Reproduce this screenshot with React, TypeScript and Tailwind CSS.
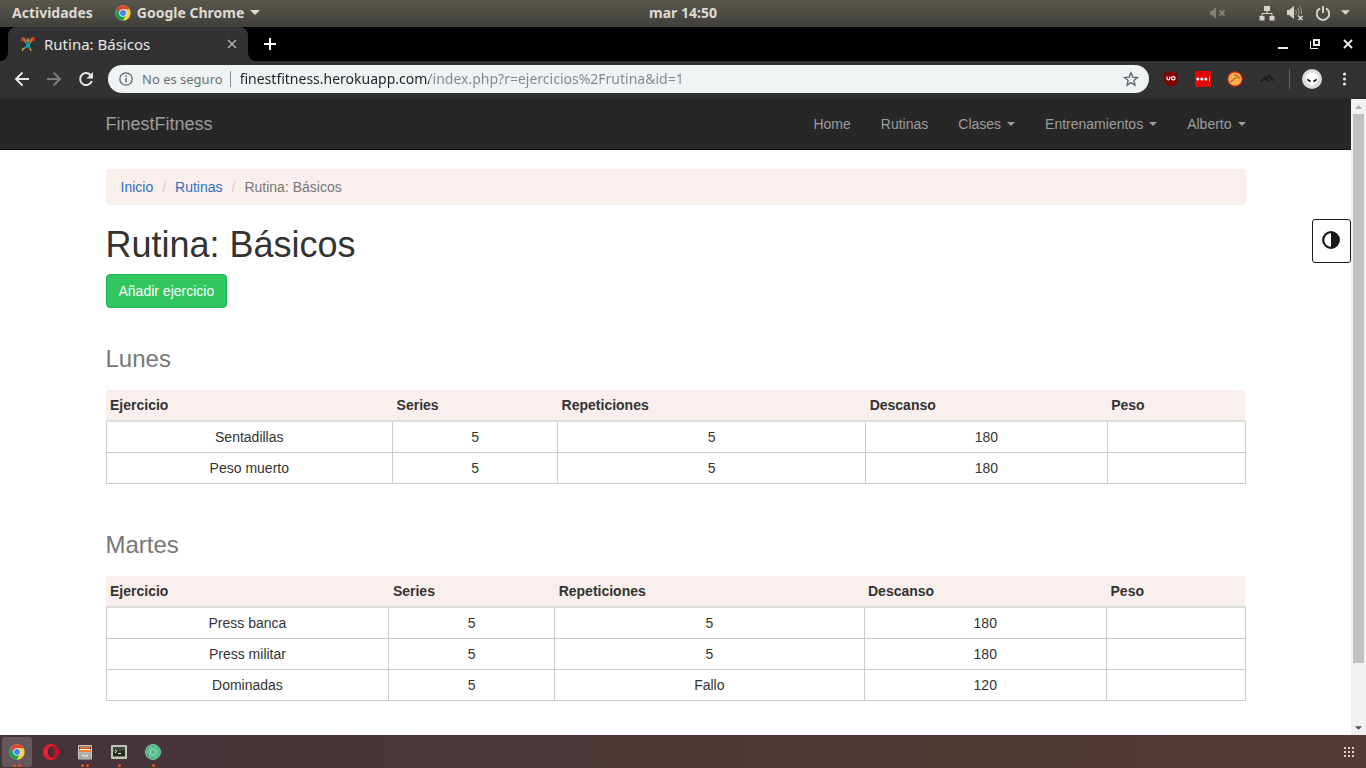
import React from "react";

type Row = [string, string, string, string, string];

const monday: Row[] = [
  ["Sentadillas", "5", "5", "180", ""],
  ["Peso muerto", "5", "5", "180", ""],
];
const tuesday: Row[] = [
  ["Press banca", "5", "5", "180", ""],
  ["Press militar", "5", "5", "180", ""],
  ["Dominadas", "5", "Fallo", "120", ""],
];

function ChromeLogo({ className }: { className: string }) {
  return (
    <svg viewBox="0 0 48 48" className={className} aria-hidden="true">
      <circle cx="24" cy="24" r="23" fill="#fdd03b" />
      <path d="M24 13H44.200A23 23 0 0 0 5 11L14.500 29.500Z" fill="#dc4437" />
      <path d="M5 11 14.500 29.500 33.500 29.500 23 47A23 23 0 0 1 5 11Z" fill="#169e55" />
      <circle cx="24" cy="24" r="11.500" fill="#f1f1f1" />
      <circle cx="24" cy="24" r="9" fill="#4285f4" />
    </svg>
  );
}

function Triangle({ className }: { className: string }) {
  return (
    <svg viewBox="0 0 10 5" className={className} aria-hidden="true">
      <path d="M0 0h10L5 5Z" fill="currentColor" />
    </svg>
  );
}

function SystemBar() {
  return (
    <header className="grid h-[27px] shrink-0 grid-cols-[1fr_auto_1fr] items-center bg-gradient-to-b from-[#58564e] to-[#403f3a] px-3 pb-0.5 font-['Noto_Sans',sans-serif] text-[14px] font-bold leading-5 text-[#dfdbd2]">
      <div className="flex items-center gap-5.5">
        <button type="button">Actividades</button>
        <button type="button" className="flex items-center gap-1.5">
          <ChromeLogo className="h-4 w-4" />
          <span>Google Chrome</span>
          <Triangle className="h-[5px] w-[10px]" />
        </button>
      </div>
      <time>mar 14:50</time>
      <div className="flex items-center justify-end pr-1 text-[#d6d3cc]">
        <svg viewBox="0 0 18 16" className="mr-8 h-4 w-[18px] opacity-40" aria-hidden="true">
          <path d="M1 6h2l4-4v12l-4-4H1Z" fill="currentColor" />
          <path d="m10.500 5.500 5 5m0-5-5 5" stroke="currentColor" strokeWidth="1.800" />
        </svg>
        <svg viewBox="0 0 16 16" className="mr-[11px] h-4 w-4" aria-hidden="true">
          <path d="M5 1h6v5H5ZM.5 11h5v4.500h-5ZM10.500 11h5v4.500h-5Z" fill="currentColor" />
          <path d="M8 6v2.500M3 11V8.500h10V11" stroke="currentColor" fill="none" />
        </svg>
        <svg viewBox="0 0 18 16" className="mr-[11px] h-4 w-[18px]" aria-hidden="true">
          <path d="M1 5h2l5-4v13l-5-4H1Z" fill="currentColor" />
          <path d="M9.500 5q2 2.500 0 5M11.500 3q3.500 4.500 0 8M13.500 1q3 4 2 8" stroke="currentColor" fill="none" opacity=".55" />
          <path d="m12.500 11 4 4m0-4-4 4" stroke="currentColor" strokeWidth="1.700" />
        </svg>
        <svg viewBox="0 0 16 16" className="mr-2.5 h-4 w-4" aria-hidden="true">
          <path d="M5 3.300a6.200 6.200 0 1 0 6 0M8 1v7" stroke="currentColor" strokeWidth="1.900" fill="none" />
        </svg>
        <Triangle className="h-[5px] w-[9px]" />
      </div>
    </header>
  );
}

function TabStrip() {
  return (
    <div className="flex h-[34px] shrink-0 items-stretch bg-black font-['Noto_Sans',sans-serif] text-[#e8e8e8]">
      <svg viewBox="0 0 8 8" className="h-2 w-2 self-end" aria-hidden="true">
        <path d="M8 0a8 8 0 0 1-8 8h8Z" fill="#323232" />
      </svg>
      <div className="flex w-60 items-center rounded-t-lg bg-[#323232] pl-3 pr-2.5">
        <svg viewBox="0 0 16 16" className="h-4 w-4 shrink-0" aria-hidden="true">
          <path d="M3 3.200 13 2.800" stroke="#8d7b70" strokeWidth=".8" />
          <path d="M4 3 6 7M12 2.800 10 7" stroke="#d99a44" strokeWidth="1.400" />
          <path d="M2 1.500v4M3.700 1v4M12.300 .8v4M14 1.300v4" stroke="#e2452c" strokeWidth="1.400" />
          <circle cx="8" cy="4.500" r="1.600" fill="#c98b3d" />
          <path d="M5.800 6.500h4.700L9.800 10l1.200 2.200-2 .3-1.200-1.300L5.500 12.500l-1.200-1L6.300 9.500Z" fill="#12a3ad" />
          <path d="M5 12 3 12.800l-.7 2.200M10 12.200l1 2.800" stroke="#e0a04a" strokeWidth="1.300" fill="none" />
        </svg>
        <span className="ml-2 flex-1 whitespace-nowrap text-[15px] leading-5">Rutina: Básicos</span>
        <button type="button" aria-label="Cerrar pestaña">
          <svg viewBox="0 0 12 12" className="h-3 w-3" aria-hidden="true">
            <path d="m2 2 8 8m0-8-8 8" stroke="#b0b0b0" strokeWidth="1.500" />
          </svg>
        </button>
      </div>
      <svg viewBox="0 0 8 8" className="h-2 w-2 self-end" aria-hidden="true">
        <path d="M0 0a8 8 0 0 0 8 8H0Z" fill="#323232" />
      </svg>
      <button type="button" aria-label="Nueva pestaña" className="ml-2 self-center">
        <svg viewBox="0 0 12 12" className="h-3 w-3" aria-hidden="true">
          <path d="M6 0v12M0 6h12" stroke="#fff" strokeWidth="2" />
        </svg>
      </button>
      <div className="ml-auto flex items-center gap-5 pr-3">
        <button type="button" aria-label="Minimizar">
          <svg viewBox="0 0 12 12" className="h-3 w-3" aria-hidden="true">
            <path d="M0 10h10" stroke="#e8e8e8" strokeWidth="2" />
          </svg>
        </button>
        <button type="button" aria-label="Restaurar">
          <svg viewBox="0 0 12 12" className="h-3 w-3" aria-hidden="true">
            <path d="M4 2h5v5H4Z" stroke="#e8e8e8" strokeWidth="2" fill="none" />
            <path d="M.5 3v7.500H8" stroke="#e8e8e8" fill="none" />
          </svg>
        </button>
        <button type="button" aria-label="Cerrar">
          <svg viewBox="0 0 12 12" className="h-3 w-3" aria-hidden="true">
            <path d="m2 2 8 8m0-8-8 8" stroke="#e8e8e8" strokeWidth="2" />
          </svg>
        </button>
      </div>
    </div>
  );
}

function Toolbar() {
  return (
    <div className="flex h-[38px] shrink-0 items-center border-b-2 border-[#2b2b2b] bg-[#323232] font-['Noto_Sans',sans-serif]">
      <div className="flex items-center gap-4 pl-3.5 pr-3.5">
        <button type="button" aria-label="Atrás">
          <svg viewBox="0 0 16 16" className="h-4 w-4" aria-hidden="true">
            <path d="M15 8H2M8.500 1.500 2 8l6.500 6.500" stroke="#e8e8e8" strokeWidth="1.900" fill="none" />
          </svg>
        </button>
        <button type="button" aria-label="Adelante">
          <svg viewBox="0 0 16 16" className="h-4 w-4" aria-hidden="true">
            <path d="M1 8h13M7.500 1.500 14 8l-6.500 6.500" stroke="#7d7d7d" strokeWidth="1.900" fill="none" />
          </svg>
        </button>
        <button type="button" aria-label="Recargar">
          <svg viewBox="0 0 16 16" className="h-4 w-4" aria-hidden="true">
            <path d="M13.800 10A6 6 0 1 1 12.500 4" stroke="#e8e8e8" strokeWidth="2" fill="none" />
            <path d="M15 1v6.500H8.500Z" fill="#e8e8e8" />
          </svg>
        </button>
      </div>
      <div className="flex h-7 min-w-0 flex-1 items-center rounded-full bg-[#eff3f4] pl-[11px] pr-2.5 leading-5">
        <svg viewBox="0 0 14 14" className="h-3.5 w-3.5 shrink-0" aria-hidden="true">
          <circle cx="7" cy="7" r="6.200" stroke="#5f6368" strokeWidth="1.300" fill="none" />
          <path d="M7 3.200v1.600M7 6v4.500" stroke="#5f6368" strokeWidth="1.500" />
        </svg>
        <label htmlFor="url" className="ml-[9px] mr-[9px] whitespace-nowrap border-r border-[#8a8d91] pr-[7px] text-[13px] leading-4 text-[#6b7075]">
          No es seguro
        </label>
        <input
          id="url"
          readOnly
          value="finestfitness.herokuapp.com/index.php?r=ejercicios%2Frutina&id=1"
          className="min-w-0 flex-1 bg-[linear-gradient(90deg,#202124_189px,#80868b_189px)] bg-clip-text text-[14px] text-transparent outline-none"
        />
        <button type="button" aria-label="Añadir a marcadores">
          <svg viewBox="0 0 16 16" className="h-4 w-4" aria-hidden="true">
            <path d="m8 1.800 1.800 4.300 4.700.4-3.600 3 1.100 4.600-4-2.500-4 2.500 1.100-4.600-3.600-3 4.700-.4Z" stroke="#5f6368" strokeWidth="1.300" fill="none" />
          </svg>
        </button>
      </div>
      <div className="flex items-center gap-3.5 pl-3.5 pr-3">
        <div className="flex items-center gap-4">
          <svg viewBox="0 0 16 16" className="h-4 w-4" aria-hidden="true">
            <path d="M8 0q3 2 7 2v6q0 5-7 8-7-3-7-8V2q4 0 7-2Z" fill="#800000" />
            <path d="M4 5.500v2.200q0 1.200 1.400 1.200T6.800 7.700V5.500" stroke="#fff" strokeWidth="1.200" fill="none" />
            <rect x="8.600" y="5.700" width="3.400" height="3.200" rx="1.500" stroke="#fff" strokeWidth="1.200" fill="none" />
          </svg>
          <svg viewBox="0 0 16 16" className="h-4 w-4" aria-hidden="true">
            <path d="M0 0h16v16H0Z" fill="#e00808" />
            <circle cx="2.800" cy="8" r="1.500" fill="#fff" />
            <circle cx="6.800" cy="8" r="1.500" fill="#fff" />
            <circle cx="10.800" cy="8" r="1.500" fill="#fff" />
            <path d="M14.500 5.500v5" stroke="#fff" strokeWidth=".8" />
          </svg>
          <svg viewBox="0 0 16 16" className="h-4 w-4" aria-hidden="true">
            <circle cx="8" cy="8" r="7.200" fill="#ffb04c" stroke="#d8200f" strokeWidth="1.200" />
            <path d="m3 11.500 7.500-6" stroke="#b5752f" strokeWidth="1.500" />
            <path d="M7 4q4-.2 5.500 4" stroke="#b5752f" strokeWidth="1.500" fill="none" />
          </svg>
          <svg viewBox="0 0 16 16" className="h-4 w-4" aria-hidden="true">
            <path d="m1.500 10.500 5-4 3 4M8 6.500l2.500-2 4 5" stroke="#1b1b1b" strokeWidth="2.200" fill="none" />
          </svg>
        </div>
        <div className="flex items-center gap-3 border-l border-[#606060] pl-3">
          <svg viewBox="0 0 20 20" className="h-5 w-5" aria-hidden="true">
            <circle cx="10" cy="10" r="10" fill="#dcdcdc" />
            <path d="M3.500 8.500q0-4.500 6.500-4.500t6.500 4.500q0 6-6.500 8.500-6.500-2.500-6.500-8.500Z" fill="#fff" />
            <path d="m4.800 9.500 4.200 2q-.3 1.800-1.700 1.500-2-.6-2.500-3.500ZM15.200 9.500l-4.200 2q.3 1.800 1.700 1.500 2-.6 2.500-3.500Z" fill="#222" />
          </svg>
          <button type="button" aria-label="Menú">
            <svg viewBox="0 0 20 16" className="h-4 w-5" aria-hidden="true">
              <circle cx="10.500" cy="3" r="1.600" fill="#e8e8e8" />
              <circle cx="10.500" cy="8" r="1.600" fill="#e8e8e8" />
              <circle cx="10.500" cy="13" r="1.600" fill="#e8e8e8" />
            </svg>
          </button>
        </div>
      </div>
    </div>
  );
}

function NavLink({ label, menu = false }: { label: string; menu?: boolean }) {
  return (
    <li>
      <a href="#" className="flex items-center gap-1.5 px-[15px] py-[15px]">
        {label}
        {menu && <Triangle className="h-1 w-2" />}
      </a>
    </li>
  );
}

function ExerciseTable({ title, rows }: { title: string; rows: Row[] }) {
  return (
    <section className="pt-[38px]">
      <h3 className="mb-[18px] text-[24px] leading-[26px] text-[#777]">{title}</h3>
      <table className="mb-[10px] w-full border-collapse text-[#333]">
        <thead>
          <tr className="bg-[#f9efed] text-left">
            {["Ejercicio", "Series", "Repeticiones", "Descanso", "Peso"].map((name) => (
              <th key={name} scope="col" className="border-b-2 border-[#ddd] py-[5px] pl-1 pr-1.5 font-bold">
                {name}
              </th>
            ))}
          </tr>
        </thead>
        <tbody>
          {rows.map((row) => (
            <tr key={row[0]} className="text-center">
              {row.map((cell, i) => (
                <td key={i} className="border border-[#ccc] p-[5px]">
                  {cell}
                </td>
              ))}
            </tr>
          ))}
        </tbody>
      </table>
    </section>
  );
}

function Page() {
  return (
    <div className="flex min-h-0 flex-1 font-['Liberation_Sans',Arial,sans-serif] text-[14px] leading-5">
      <div className="relative min-w-0 flex-1 overflow-hidden bg-white">
        <nav className="border-b border-[#101010] bg-[#272727] text-[#9d9d9d]">
          <div className="mx-auto flex h-[50px] max-w-[1170px] items-center justify-between pl-[15px]">
            <a href="#" className="text-[18px]">FinestFitness</a>
            <ul className="flex">
              <NavLink label="Home" />
              <NavLink label="Rutinas" />
              <NavLink label="Clases" menu />
              <NavLink label="Entrenamientos" menu />
              <NavLink label="Alberto" menu />
            </ul>
          </div>
        </nav>
        <main className="mx-auto max-w-[1170px] px-[15px] pt-[19px]">
          <ol className="mb-5 flex rounded bg-[#f9efed] px-[15px] py-2 text-[#777]">
            <li><a href="#" className="text-[#2f6fc1]">Inicio</a></li>
            <li className="px-[9px] text-[#ccc]" aria-hidden="true">/</li>
            <li><a href="#" className="text-[#2f6fc1]">Rutinas</a></li>
            <li className="px-[9px] text-[#ccc]" aria-hidden="true">/</li>
            <li>Rutina: Básicos</li>
          </ol>
          <h1 className="mb-[9px] text-[36px] leading-10 text-[#333]">Rutina: Básicos</h1>
          <button type="button" className="block rounded border border-[#18b45a] bg-[#32c65f] px-3 py-1.5 text-white">
            Añadir ejercicio
          </button>
          <ExerciseTable title="Lunes" rows={monday} />
          <ExerciseTable title="Martes" rows={tuesday} />
        </main>
        <button type="button" aria-label="Contraste" className="absolute right-0 top-[120px] flex h-11 w-[39px] items-center justify-center rounded-[3px] border border-[#1a1a1a] bg-white pb-0.5 pr-px">
          <svg viewBox="0 0 18 18" className="h-[18px] w-[18px]" aria-hidden="true">
            <circle cx="9" cy="9" r="7.800" stroke="#1a1a1a" strokeWidth="2.200" fill="#fff" />
            <path d="M9 1a8 8 0 0 1 0 16Z" fill="#1a1a1a" />
          </svg>
        </button>
      </div>
      <div className="flex w-[15px] shrink-0 flex-col bg-[#f1f1f1]" aria-hidden="true">
        <div className="flex h-[15px] items-center justify-center">
          <Triangle className="h-1 w-[7px] rotate-180 text-[#a3a3a3]" />
        </div>
        <div className="min-h-0 flex-1 px-0.5">
          <div className="h-[90.600%] bg-[#c1c1c1]" />
        </div>
        <div className="flex h-[15px] items-center justify-center">
          <Triangle className="h-1 w-[7px] text-[#505050]" />
        </div>
      </div>
    </div>
  );
}

function DockItem({ label, dots, active = false, children }: { label: string; dots: number; active?: boolean; children: React.ReactNode }) {
  return (
    <button
      type="button"
      aria-label={label}
      className={active ? "relative flex h-[30px] w-[30px] items-center justify-center rounded-[3px] bg-[#64585c]" : "relative flex h-[30px] w-[30px] items-center justify-center"}
    >
      {children}
      <span className="absolute inset-x-0 bottom-0 flex justify-center gap-0.5">
        {Array.from({ length: dots }, (_, i) => (
          <span key={i} className="h-[3px] w-[3px] rounded-full bg-[#e95420]" />
        ))}
      </span>
    </button>
  );
}

function Dock() {
  return (
    <footer className="flex h-[33px] shrink-0 items-center justify-between bg-gradient-to-r from-[#44343a] to-[#563932] pl-0.5 pr-3">
      <div className="flex items-center gap-1 pt-px">
        <DockItem label="Google Chrome" dots={2} active>
          <ChromeLogo className="h-4 w-4" />
        </DockItem>
        <DockItem label="Opera" dots={0}>
          <svg viewBox="0 0 16 16" className="h-4 w-4" aria-hidden="true">
            <path fillRule="evenodd" d="M8 0a8 8 0 1 1 0 16A8 8 0 0 1 8 0ZM8.300 2.300C6.300 2.300 5 5 5 8s1.300 5.700 3.300 5.700S11.500 11 11.500 8s-1.200-5.700-3.200-5.700Z" fill="#ec1c2c" />
            <path d="M8.300 2.300Q11 1 13 2a8 8 0 0 1 0 12q-2 1-4.700-.3c2 0 3.200-2.700 3.200-5.700s-1.200-5.700-3.200-5.700Z" fill="#c01525" />
          </svg>
        </DockItem>
        <DockItem label="Archivos" dots={2}>
          <svg viewBox="0 0 16 16" className="h-4 w-4" aria-hidden="true">
            <rect x="1" y="1" width="14" height="14.500" rx="1" fill="#c9c7c2" />
            <path d="M2 2.500h12V8H2Z" fill="#6b3c22" />
            <path d="M3 3h10v1.500H3Z" fill="#f08030" />
            <path d="M2.500 5h11v1H2.500Z" fill="#f7f1e8" />
            <path d="M2 6h12v2H2Z" fill="#f07f2e" />
            <path d="M2 8.500h12V15H2Z" fill="#a9a8a4" />
            <path d="M6 10.500V12h4v-1.500" stroke="#f4f4f4" strokeWidth="1.200" fill="none" />
          </svg>
        </DockItem>
        <DockItem label="Terminal" dots={1}>
          <svg viewBox="0 0 16 16" className="h-4 w-4" aria-hidden="true">
            <rect x="0" y="1" width="16" height="14" rx="1" fill="#c5c3bd" />
            <path d="M2 3h12v9.500H2Z" fill="#23301f" />
            <path d="M2 3h12v3L2 8Z" fill="#506048" opacity=".6" />
            <path d="m4 6 1.800 1.500L4 9M7 9.500h3" stroke="#eee" fill="none" />
          </svg>
        </DockItem>
        <DockItem label="Atom" dots={1}>
          <svg viewBox="0 0 16 16" className="h-4 w-4" aria-hidden="true">
            <circle cx="8" cy="8" r="7.500" fill="#3fb37a" stroke="#9adbb9" strokeWidth=".8" />
            <g stroke="#93d9b6" strokeWidth=".8" fill="none">
              <ellipse cx="8" cy="8" rx="5.500" ry="2.200" />
              <ellipse cx="8" cy="8" rx="5.500" ry="2.200" transform="rotate(60 8 8)" />
              <ellipse cx="8" cy="8" rx="5.500" ry="2.200" transform="rotate(120 8 8)" />
            </g>
          </svg>
        </DockItem>
      </div>
      <button type="button" aria-label="Mostrar aplicaciones">
        <svg viewBox="0 0 10 10" className="h-2.5 w-2.5" aria-hidden="true">
          <path d="M0 0h2v2H0ZM4 0h2v2H4ZM8 0h2v2H8ZM0 4h2v2H0ZM4 4h2v2H4ZM8 4h2v2H8ZM0 8h2v2H0ZM4 8h2v2H4ZM8 8h2v2H8Z" fill="#d8d2cf" />
        </svg>
      </button>
    </footer>
  );
}

export default function App() {
  return (
    <div className="flex h-screen flex-col overflow-hidden">
      <SystemBar />
      <TabStrip />
      <Toolbar />
      <Page />
      <Dock />
    </div>
  );
}
